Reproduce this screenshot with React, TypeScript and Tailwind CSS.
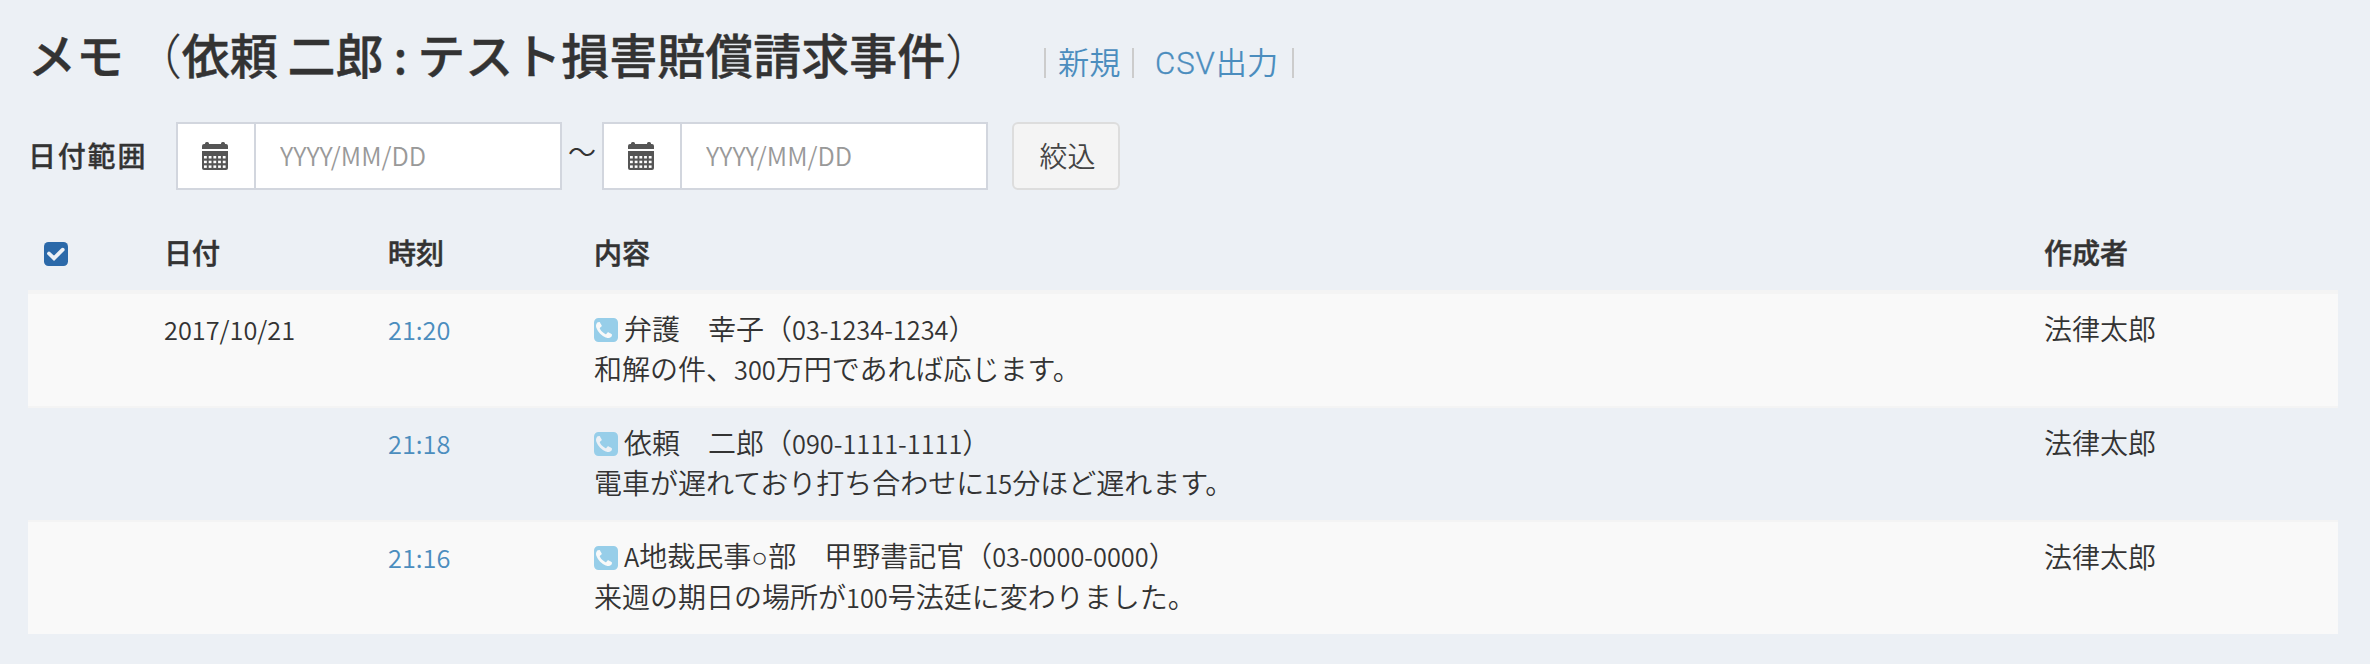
import React from "react";

const rows = [
  { date: "2017/10/21", time: "21:20", who: "弁護　幸子（03-1234-1234）", text: "和解の件、300万円であれば応じます。", author: "法律太郎" },
  { date: "", time: "21:18", who: "依頼　二郎（090-1111-1111）", text: "電車が遅れており打ち合わせに15分ほど遅れます。", author: "法律太郎" },
  { date: "", time: "21:16", who: "A地裁民事○部　甲野書記官（03-0000-0000）", text: "来週の期日の場所が100号法廷に変わりました。", author: "法律太郎" },
];

const cols = "grid grid-cols-[120px_224px_206px_1450px_310px]";

/** Sets Latin runs slightly smaller than the surrounding Japanese text. */
function Mixed({ children }: { children: string }) {
  return (
    <span>
      {children.split(/([ -~]+|○)/).map((part, i) => {
        if (part === "○") return <span key={i} className="font-['Liberation_Sans']">○</span>;
        if (/^[ -~]+$/.test(part)) return <span key={i} className="text-[0.905em] leading-none whitespace-pre">{part}</span>;
        return part;
      })}
    </span>
  );
}

function CalendarIcon() {
  const xs = [2, 6.7, 11.4, 16.1, 20.8];
  const ys = [14, 18.7, 23.4];
  return (
    <svg width="26" height="28" viewBox="0 0 26 28" fill="#555">
      <path d="M0 7V4a2 2 0 0 1 2-2h1V1.5A1.5 1.5 0 0 1 4.500 0h1A1.500 1.500 0 0 1 7 1.500V2h12v-.5A1.500 1.500 0 0 1 20.500 0h1A1.500 1.500 0 0 1 23 1.500V2h1a2 2 0 0 1 2 2v3z" />
      <path d="M0 9h26v17a2 2 0 0 1-2 2H2a2 2 0 0 1-2-2z" />
      {ys.map((y) => xs.map((x) => <rect key={x + "-" + y} x={x} y={y} width="2.800" height="2.500" fill="#fff" />))}
    </svg>
  );
}

function PhoneSquareIcon() {
  return (
    <svg className="block shrink-0" width="24" height="24" viewBox="128 128 1536 1536">
      <path
        fill="#97cee9"
        d="M1280 1193q0-11-2-16t-18-16.5-40.5-25-47.5-26.5-45.500-25-28.500-15q-5-3-19-13t-25-15-21-5q-15 0-36.500 20.500t-39.500 45-38.500 45-33.500 20.500q-7 0-16.500-3.500t-15.500-6.500-17-9.500-14-8.500q-99-55-170-126.500t-127-170.500q-2-3-8.500-14t-9.500-17-6.500-15.500-3.500-16.500q0-13 20.500-33.500t45-38.500 45-39.500 20.500-36.500q0-10-5-21t-15-25-13-19q-3-6-15-28.500t-25-45.500-26.500-47.500-25-40.500-16.500-18-16-2q-48 0-101 22-46 21-80 94.500t-34 130.500q0 16 2.500 34t5 30.500 9 33 10 29.500 12.500 33 11 30q60 164 216.500 320.500t320.500 216.500q6 2 30 11t33 12.500 29.500 10 33 9 30.500 5 34 2.500q57 0 130.500-34t94.500-80q22-53 22-101zm384-777v960q0 119-84.500 203.500t-203.500 84.500h-960q-119 0-203.500-84.500t-84.500-203.500v-960q0-119 84.500-203.500t203.500-84.500h960q119 0 203.500 84.500t84.500 203.500z"
      />
    </svg>
  );
}

function CheckSquareIcon() {
  return (
    <svg className="block" width="24" height="24" viewBox="0 0 24 24">
      <rect width="24" height="24" rx="4.500" fill="#2b69a9" />
      <path d="M5 11.500 10 16.300 18.700 7.700" fill="none" stroke="#ecf0f5" strokeWidth="3.800" strokeLinecap="round" strokeLinejoin="miter" />
    </svg>
  );
}

function DateField() {
  return (
    <div className="flex h-[68px] w-[386px] border-2 border-[#d2d6de] bg-white">
      <div className="flex w-[78px] shrink-0 items-center justify-center border-r-2 border-[#d2d6de] pr-0.5">
        <CalendarIcon />
      </div>
      <input
        className="min-w-0 flex-1 bg-white pb-0.5 pl-6 text-[25.3px] outline-none placeholder:text-[#999]"
        placeholder="YYYY/MM/DD"
      />
    </div>
  );
}

export default function App() {
  return (
    <div className="h-[664px] w-[2370px] overflow-hidden bg-[#ecf0f5] pr-8 pl-7 font-['Noto_Sans_CJK_JP_DemiLight','Noto_Sans_CJK_JP',sans-serif] text-[28px] leading-10 font-normal text-[#333]">
      <header className="flex h-[122px] items-start pt-[21px]">
        <h1 className="h-16 w-[1016px] font-['Noto_Sans_CJK_JP',sans-serif] text-[48px] leading-16 font-medium whitespace-nowrap [-webkit-text-stroke:0.4px_#333]">
          <Mixed>メモ </Mixed>
          <span className="font-light [-webkit-text-stroke:0.2px_#333]">（</span>
          <Mixed>依頼 二郎</Mixed>
          <span className="text-[45px] leading-none"> : </span>
          テスト損害賠償請求事件
          <span className="font-light [-webkit-text-stroke:0.2px_#333]">）</span>
        </h1>
        <nav className="mt-[27px] flex h-[30px] w-[250px] items-center border-x-2 border-[#ccc] text-[31.2px] whitespace-nowrap text-[#4b8dbe]">
          <a className="flex h-[30px] w-[88px] shrink-0 items-center border-r-2 border-[#ccc] pb-[5px] pl-3">新規</a>
          <a className="pb-[5px] pl-[21px]">
            <span className="font-['Roboto'] leading-none font-light tracking-[0.9px] [-webkit-text-stroke:0.3px_#4b8dbe]">CSV</span>出力
          </a>
        </nav>
      </header>
      <div className="flex h-[68px] items-center">
        <label className="w-[148px] pb-[3px] font-['Noto_Sans_CJK_JP',sans-serif] font-medium tracking-[1.8px] [-webkit-text-stroke:0.3px_#333]">日付範囲</label>
        <DateField />
        <span className="w-10 pb-2.5 text-center">～</span>
        <DateField />
        <button className="ml-6 h-[68px] w-[108px] rounded-md border-2 border-[#ddd] bg-[#f4f4f4] pb-[3px] pl-[3px] text-[#444]">絞込</button>
      </div>
      <main className="mt-[42px]">
        <div className={cols + " h-[58px] font-['Noto_Sans_CJK_JP',sans-serif] font-medium [-webkit-text-stroke:0.5px_#333]"}>
          <div className="pt-2.5 pl-4"><CheckSquareIcon /></div>
          <div className="pl-4">日付</div>
          <div className="pl-4">時刻</div>
          <div className="pl-4">内容</div>
          <div className="pl-4">作成者</div>
        </div>
        <div className="h-0.5 bg-[#f4f4f4]" />
        {rows.map((r, i) => (
          <div key={r.time} className={cols + " h-[114px] border-t-2 border-[#f4f4f4] pt-3.5 " + (i % 2 === 0 ? "bg-[#f9f9f9]" : "")}>
            <div />
            <div className="pl-4"><Mixed>{r.date}</Mixed></div>
            <div className="pl-4 text-[#4b8dbe]"><Mixed>{r.time}</Mixed></div>
            <div className="pl-4">
              <div className="flex h-10 items-center gap-1.5">
                <div className="pt-1"><PhoneSquareIcon /></div>
                <Mixed>{r.who}</Mixed>
              </div>
              <div><Mixed>{r.text}</Mixed></div>
            </div>
            <div className="pl-4">{r.author}</div>
          </div>
        ))}
      </main>
    </div>
  );
}
